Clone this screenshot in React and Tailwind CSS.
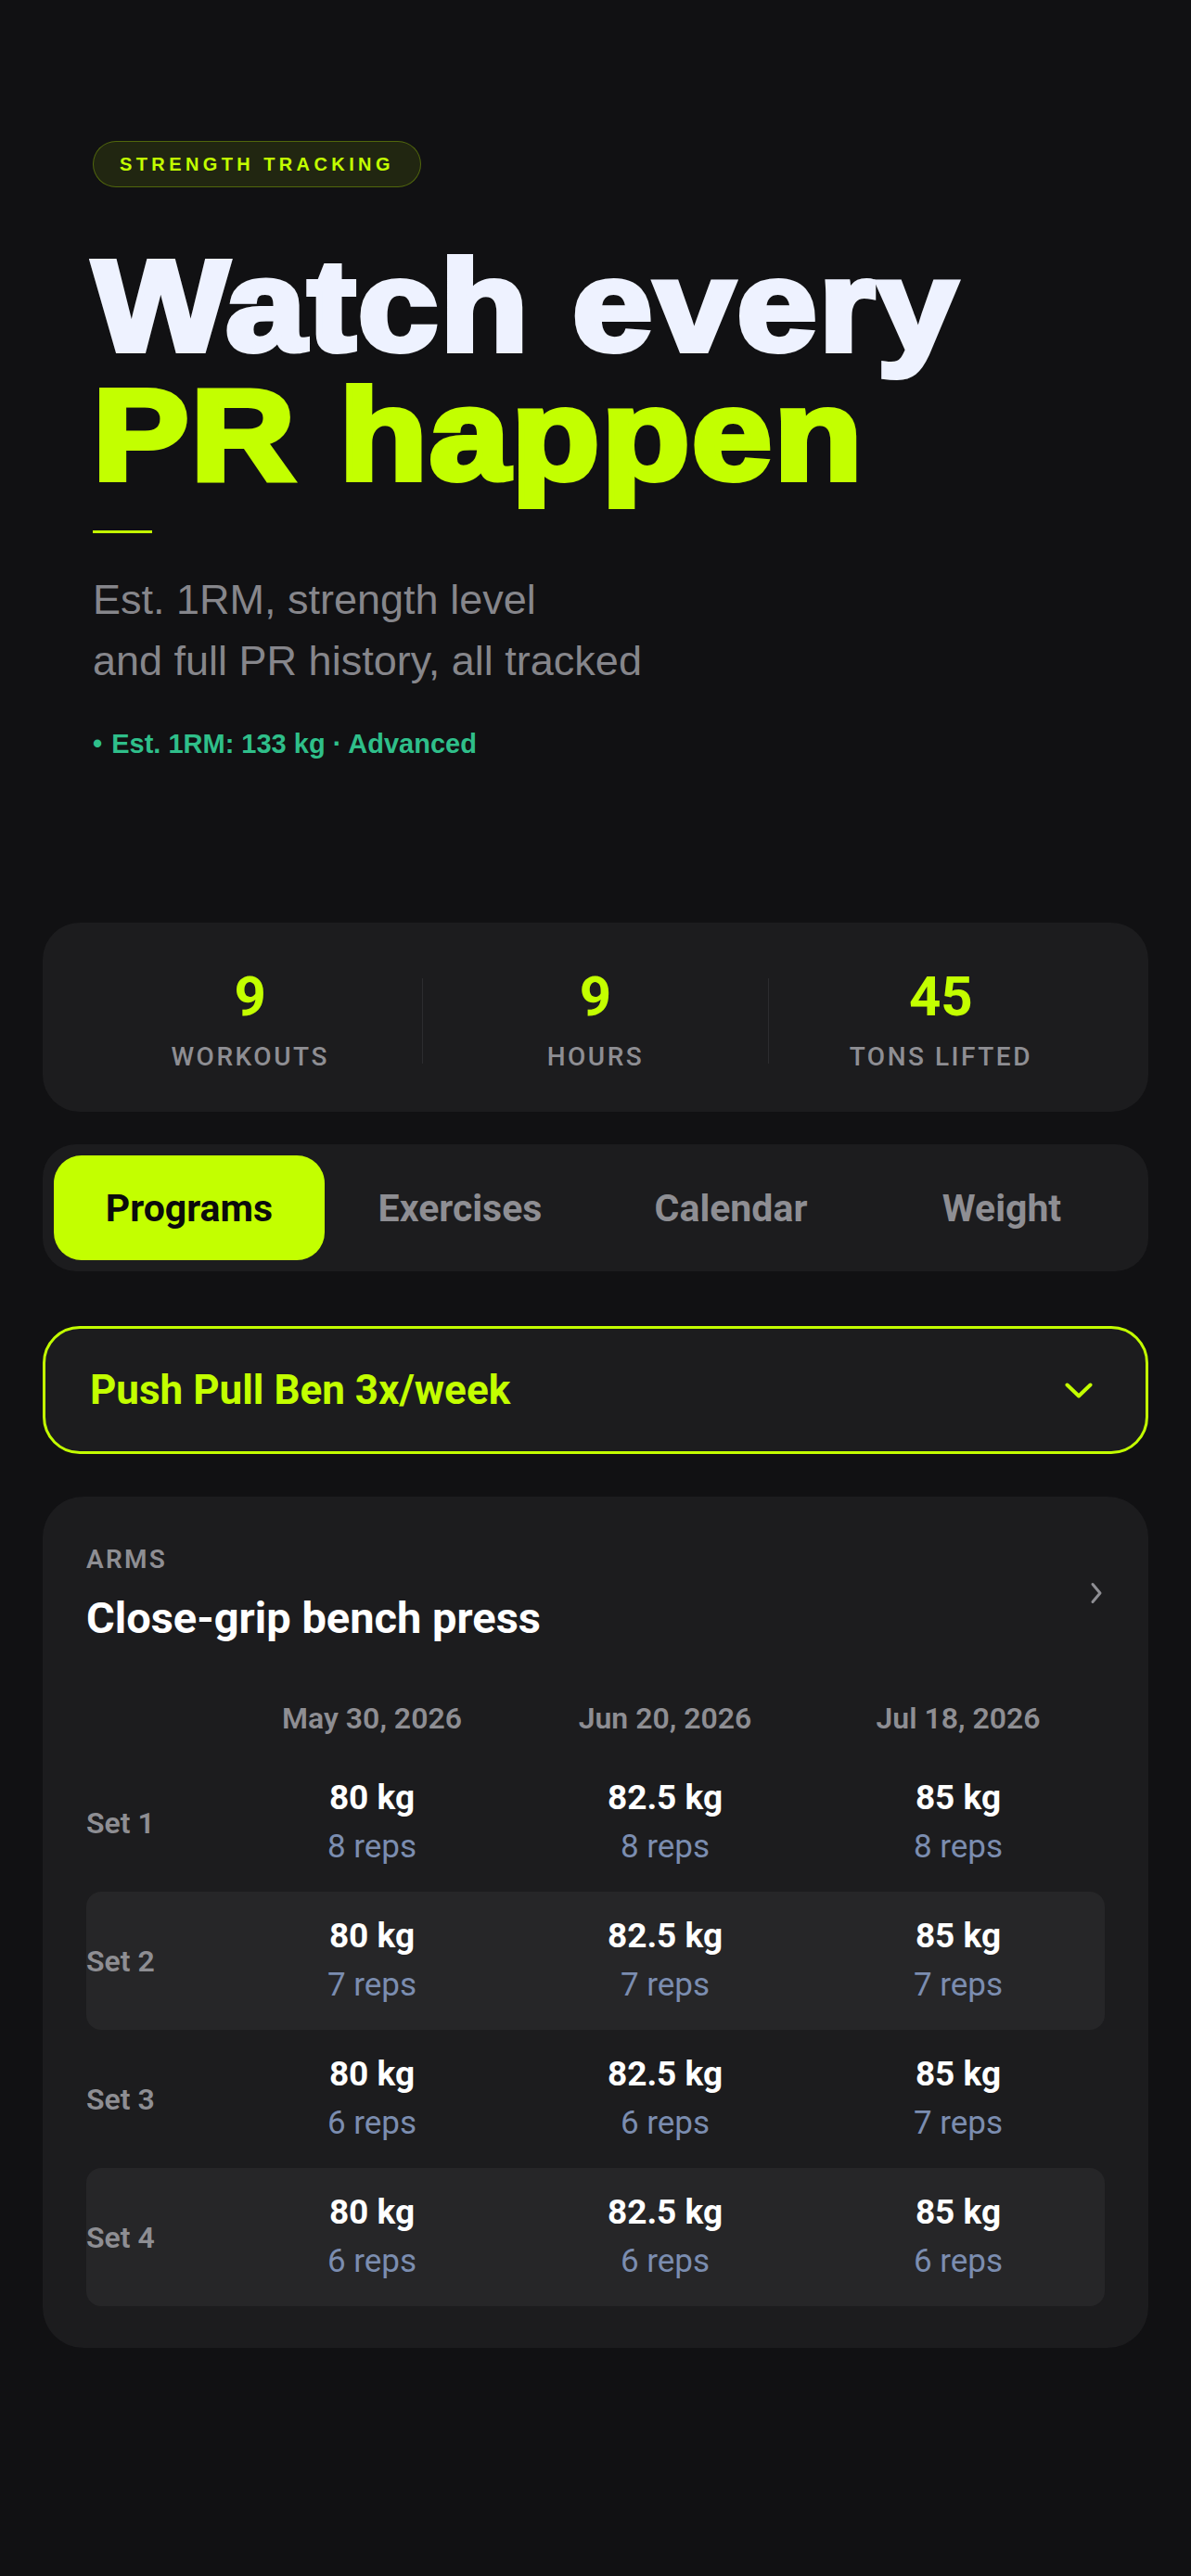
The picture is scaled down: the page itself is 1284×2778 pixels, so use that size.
const tabs = ["Programs", "Exercises", "Calendar", "Weight"];

const rows = [
  { label: "Set 1", hl: false, cells: [["80 kg", "8 reps"], ["82.5 kg", "8 reps"], ["85 kg", "8 reps"]] },
  { label: "Set 2", hl: true, cells: [["80 kg", "7 reps"], ["82.5 kg", "7 reps"], ["85 kg", "7 reps"]] },
  { label: "Set 3", hl: false, cells: [["80 kg", "6 reps"], ["82.5 kg", "6 reps"], ["85 kg", "7 reps"]] },
  { label: "Set 4", hl: true, cells: [["80 kg", "6 reps"], ["82.5 kg", "6 reps"], ["85 kg", "6 reps"]] },
];

function Stat({ value, label }) {
  return (
    <div className="flex flex-1 flex-col items-center">
      <div className="text-[60px] font-bold leading-none text-[#c3ff00]">{value}</div>
      <div className="mt-[18px] text-[28px] font-medium uppercase leading-[34px] tracking-[0.09em] text-[#8e8e93]">
        {label}
      </div>
    </div>
  );
}

export default function App() {
  return (
    <div className="min-h-[2778px] bg-[#111113] px-[46px] pb-[200px]">
      <section className="px-[54px] pt-[152px] font-['Liberation_Sans',Arial,sans-serif]">
        <div className="flex h-[50px] w-fit items-center rounded-full border border-[#c3ff004d] bg-[#c3ff0017] px-[28px] text-[20px] font-bold tracking-[0.22em] text-[#c3ff00]">
          STRENGTH TRACKING
        </div>
        <h1 className="mt-[58px] origin-left scale-x-[1.11] whitespace-nowrap text-[140px] font-bold leading-[139px] tracking-[2px] text-[#eef2ff] [-webkit-text-stroke-width:6px]">
          Watch every
          <br />
          <span className="text-[#c3ff00]">PR happen</span>
        </h1>
        <div className="mt-[34px] h-[3px] w-[64px] bg-[#c3ff00]" />
        <p className="mt-[39px] text-[45px] leading-[66px] text-[#86868b]">
          Est. 1RM, strength level
          <br />
          and full PR history, all tracked
        </p>
        <p className="mt-[35px] text-[29px] font-bold leading-[42px] text-[#2fbf8a]">
          <span className="mr-[10px]">•</span>Est. 1RM: 133 kg · Advanced
        </p>
      </section>

      <div className="font-['Roboto',sans-serif]">
        <div className="mt-[172px] flex items-center rounded-[40px] bg-[#1c1c1e] px-[38px] pb-[42px] pt-[50px]">
          <Stat value="9" label="Workouts" />
          <div className="h-[92px] w-px bg-[#2c2c2f]" />
          <Stat value="9" label="Hours" />
          <div className="h-[92px] w-px bg-[#2c2c2f]" />
          <Stat value="45" label="Tons lifted" />
        </div>

        <div className="mt-[35px] grid grid-cols-4 rounded-[36px] bg-[#1c1c1e] p-[12px]">
          {tabs.map((t, i) => (
            <div
              key={t}
              className={
                i === 0
                  ? "flex h-[113px] items-center justify-center rounded-[30px] bg-[#c3ff00] pt-[3px] text-[41px] font-bold text-[#0b0b0c]"
                  : "flex h-[113px] items-center justify-center rounded-[30px] pt-[3px] text-[41px] font-bold text-[#8e8e93]"
              }
            >
              {t}
            </div>
          ))}
        </div>

        <div className="mt-[59px] flex h-[138px] items-center justify-between rounded-[40px] border-[3px] border-[#c3ff00] bg-[#1c1c1e] pl-[48px] pr-[57px]">
          <span className="text-[44px] font-bold text-[#c3ff00]">Push Pull Ben 3x/week</span>
          <svg width="30" height="17" viewBox="0 0 30 17" fill="none">
            <path d="M2.5 2.5 L15 14.5 L27.5 2.5" stroke="#c3ff00" strokeWidth="4" strokeLinecap="round" strokeLinejoin="round" />
          </svg>
        </div>

        <div className="mt-[46px] rounded-[44px] bg-[#1c1c1e] px-[47px] pb-[45px] pt-[50px]">
          <div className="flex items-center justify-between">
            <div>
              <div className="text-[28px] font-semibold leading-[36px] tracking-[0.08em] text-[#8e8e93]">ARMS</div>
              <div className="mt-[17px] text-[47px] font-bold leading-[55px] text-white">Close-grip bench press</div>
            </div>
            <svg width="14" height="24" viewBox="0 0 14 24" fill="none" className="mr-[2px]">
              <path d="M3 2.5 L11 12 L3 21.5" stroke="#8e8e93" strokeWidth="3" strokeLinecap="round" strokeLinejoin="round" />
            </svg>
          </div>

          <div className="mt-[61px] grid grid-cols-[150px_1fr_1fr_1fr] text-center text-[32px] font-semibold leading-[40px] text-[#8e8e93]">
            <div />
            <div>May 30, 2026</div>
            <div>Jun 20, 2026</div>
            <div>Jul 18, 2026</div>
          </div>

          <div className="mt-[18px]">
            {rows.map((r) => (
              <div
                key={r.label}
                className={
                  r.hl
                    ? "grid h-[149px] grid-cols-[150px_1fr_1fr_1fr] items-center rounded-[16px] bg-[#262628]"
                    : "grid h-[149px] grid-cols-[150px_1fr_1fr_1fr] items-center rounded-[16px]"
                }
              >
                <div className="text-[32px] font-semibold text-[#8e8e93]">{r.label}</div>
                {r.cells.map(([w, reps], j) => (
                  <div key={j} className="flex flex-col items-center">
                    <div className="text-[37px] font-bold leading-[44px] text-white">{w}</div>
                    <div className="mt-[9px] text-[35px] leading-[44px] text-[#7b8db0]">{reps}</div>
                  </div>
                ))}
              </div>
            ))}
          </div>
        </div>
      </div>
    </div>
  );
}
